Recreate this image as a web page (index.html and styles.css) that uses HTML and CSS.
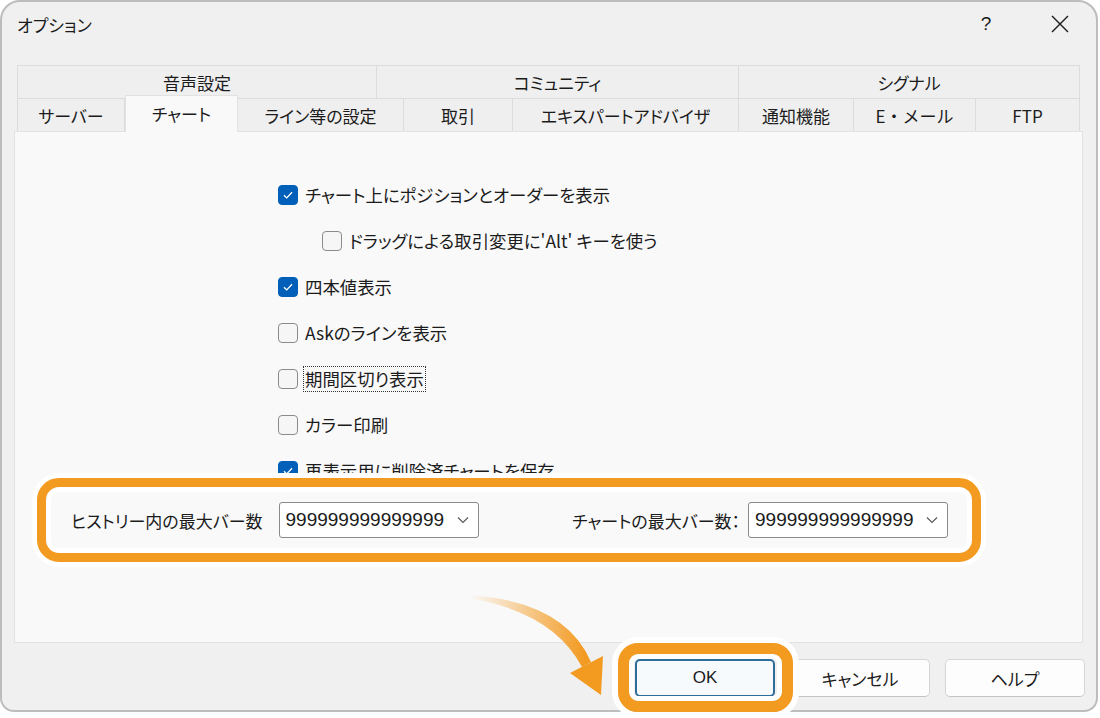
FILE: index.html
```html
<!DOCTYPE html>
<html lang="ja">
<head>
    <meta charset="UTF-8">
    <title>オプション</title>
    <link rel="stylesheet" href="styles.css">
</head>
<body>

    <div class="window">
        <div class="titlebar">
            <span class="title">オプション</span>
            <span class="help">?</span>
            <span class="close">
                <svg width="20" height="20" viewBox="0 0 20 20"><path d="M2 2 L18 18 M18 2 L2 18" stroke="#1b1b1b" stroke-width="1.4" fill="none"/></svg>
            </span>
        </div>

        <div class="tabs">
            <div class="tab-row">
                <div class="tab first" style="width:360px">音声設定</div>
                <div class="tab" style="width:362px">コミュニティ</div>
                <div class="tab" style="width:341px">シグナル</div>
            </div>
            <div class="tab-row">
                <div class="tab first" style="width:108px">サーバー</div>
                <div class="tab active" style="width:113px">チャート</div>
                <div class="tab" style="width:166px">ライン等の設定</div>
                <div class="tab" style="width:109px">取引</div>
                <div class="tab" style="width:226px">エキスパートアドバイザ</div>
                <div class="tab" style="width:115px">通知機能</div>
                <div class="tab wide-dot" style="width:122px">E・メール</div>
                <div class="tab" style="width:104px">FTP</div>
            </div>
        </div>

        <div class="panel">
            <ul class="options">
                <li class="option"><span class="check on"><svg viewBox="0 0 20 20"><path d="M5.5 10.2 L8.6 13.2 L14.5 7" /></svg></span>チャート上にポジションとオーダーを表示</li>
                <li class="option sub"><span class="check"></span>ドラッグによる取引変更に'Alt' キーを使う</li>
                <li class="option"><span class="check on"><svg viewBox="0 0 20 20"><path d="M5.5 10.2 L8.6 13.2 L14.5 7" /></svg></span>四本値表示</li>
                <li class="option"><span class="check"></span>Askのラインを表示</li>
                <li class="option"><span class="check"></span><span class="focused">期間区切り表示</span></li>
                <li class="option"><span class="check"></span>カラー印刷</li>
                <li class="option"><span class="check on"><svg viewBox="0 0 20 20"><path d="M5.5 10.2 L8.6 13.2 L14.5 7" /></svg></span>再表示用に削除済チャートを保存</li>
            </ul>

            <div class="bars">
                <div class="field">
                    <label>ヒストリー内の最大バー数</label>
                    <div class="combo">
                        <span>999999999999999</span>
                        <svg width="12" height="8" viewBox="0 0 12 8"><path d="M1 1.5 L6 6.5 L11 1.5" stroke="#555" stroke-width="1.1" fill="none"/></svg>
                    </div>
                </div>
                <div class="field second">
                    <label>チャートの最大バー数：</label>
                    <div class="combo">
                        <span>999999999999999</span>
                        <svg width="12" height="8" viewBox="0 0 12 8"><path d="M1 1.5 L6 6.5 L11 1.5" stroke="#555" stroke-width="1.1" fill="none"/></svg>
                    </div>
                </div>
            </div>
        </div>

        <div class="buttons">
            <button class="btn btn-ok">OK</button>
            <button class="btn">キャンセル</button>
            <button class="btn">ヘルプ</button>
        </div>

        <!-- 注目枠と矢印 -->
        <div class="ok-highlight"></div>
        <svg class="arrow" viewBox="0 0 1100 718">
            <defs>
                <linearGradient id="fade" x1="470" y1="0" x2="585" y2="0" gradientUnits="userSpaceOnUse">
                    <stop offset="0" stop-color="#f39a21" stop-opacity="0"/>
                    <stop offset="1" stop-color="#f39a21" stop-opacity="1"/>
                </linearGradient>
            </defs>
            <path d="M468 595 Q565 601 591 662 L582 667 Q553 612 468 598 Z" fill="url(#fade)"/>
            <path d="M570 673 L603 656 L601 695 Z" fill="#f39a21"/>
        </svg>
    </div>

</body>
</html>
```

FILE: styles.css
```css
* {
    box-sizing: border-box;
}

body {
    margin: 0;
    background-color: #fff;
    font-family: "Noto Sans CJK JP", "Noto Sans", sans-serif;
    font-feature-settings: "palt";
    color: #1b1b1b;
}

.window {
    position: relative;
    width: 1098px;
    height: 712px;
    background-color: #f0f0f0;
    border: 2px solid #bdbdbd;
    border-radius: 20px 20px 14px 14px;
}

.titlebar {
    height: 44px;
    display: flex;
    align-items: center;
    padding: 0 16px 0 15px;
}

.title {
    flex: 1;
    font-size: 17px;
}

.help {
    width: 30px;
    text-align: center;
    font-family: "Liberation Sans", sans-serif;
    font-size: 19px;
}

.close {
    width: 40px;
    margin-left: 39px;
    display: flex;
    justify-content: center;
}

.tabs {
    margin: 19px 0 0 15px;
    width: 1063px;
}

.tab-row {
    display: flex;
    height: 33px;
}

.tab {
    display: flex;
    align-items: center;
    justify-content: center;
    font-size: 17px;
    line-height: 1;
    background-color: #efefef;
    border-top: 1px solid #dcdcdc;
    border-right: 1px solid #dcdcdc;
}

.tab.first {
    border-left: 1px solid #dcdcdc;
}

.tab.wide-dot {
    font-feature-settings: normal;
}

.tab.active {
    position: relative;
    z-index: 2;
    align-self: flex-start;
    height: 37px;
    margin-top: -3px;
    padding-bottom: 2px;
    background-color: #f9f9f9;
    border-left: 1px solid #e2e2e2;
    border-right-color: #e2e2e2;
    border-top-color: #e2e2e2;
}

.panel {
    position: relative;
    margin-left: 12px;
    width: 1069px;
    height: 512px;
    background-color: #f9f9f9;
    border: 1px solid #e2e2e2;
}

.options {
    list-style-type: none;
    margin: 0;
    padding: 40px 0 0 263px;
}

.option {
    height: 46px;
    display: flex;
    align-items: center;
    font-size: 17.4px;
    line-height: 1;
}

.option.sub {
    padding-left: 44px;
}

.check {
    flex: none;
    width: 20px;
    height: 20px;
    margin-right: 7px;
    border: 1px solid #8b8b8b;
    border-radius: 4px;
    background-color: #f6f6f6;
}

.check.on {
    background-color: #005fb8;
    border-color: #005fb8;
}

.check svg {
    display: block;
    width: 18px;
    height: 18px;
    fill: none;
    stroke: #fff;
    stroke-width: 1.5;
}

.focused {
    margin-left: -2px;
    padding: 3px 1px;
    border: 1px dotted #333;
}

.bars {
    position: relative;
    z-index: 1;
    margin: -16px 0 0 22px;
    width: 944px;
    height: 84px;
    display: flex;
    align-items: center;
    padding: 0 24px 0 25px;
    background-color: #f9f9f9;
    border: 9px solid #f39a21;
    border-radius: 22px;
    box-shadow: 0 0 0 5px #fff, inset 0 0 0 5px #fff;
}

.field {
    display: flex;
    align-items: center;
    font-size: 17px;
}

.field label {
    margin-right: 16px;
}

.field.second {
    margin-left: auto;
}

.field.second label {
    margin-right: 8px;
}

.combo {
    width: 200px;
    height: 36px;
    display: flex;
    align-items: center;
    justify-content: space-between;
    padding: 0 9px 0 6px;
    background-color: #fff;
    border: 1px solid #8a8a8a;
    border-radius: 3px;
    font-family: "Liberation Sans", sans-serif;
    font-size: 19px;
}

.buttons {
    display: flex;
    justify-content: flex-end;
    gap: 15px;
    margin-top: 16px;
    padding-right: 11px;
}

.btn {
    width: 140px;
    height: 38px;
    font-family: "Noto Sans CJK JP", sans-serif;
    font-feature-settings: "palt";
    font-size: 17px;
    color: #1b1b1b;
    background-color: #fdfdfd;
    border: 1px solid #d6d6d6;
    border-bottom-color: #c4c4c4;
    border-radius: 5px;
}

.btn-ok {
    font-family: "Liberation Sans", sans-serif;
    border: 2px solid #2f6c99;
    background-color: #f6fafd;
}

.ok-highlight {
    position: absolute;
    left: 616px;
    top: 641px;
    width: 175px;
    height: 69px;
    border: 11px solid #f39a21;
    border-radius: 20px;
    box-shadow: 0 0 0 6px #fff, inset 0 0 0 5px #fff;
}

.arrow {
    position: absolute;
    left: -2px;
    top: -2px;
    width: 1100px;
    height: 718px;
    pointer-events: none;
}
```
